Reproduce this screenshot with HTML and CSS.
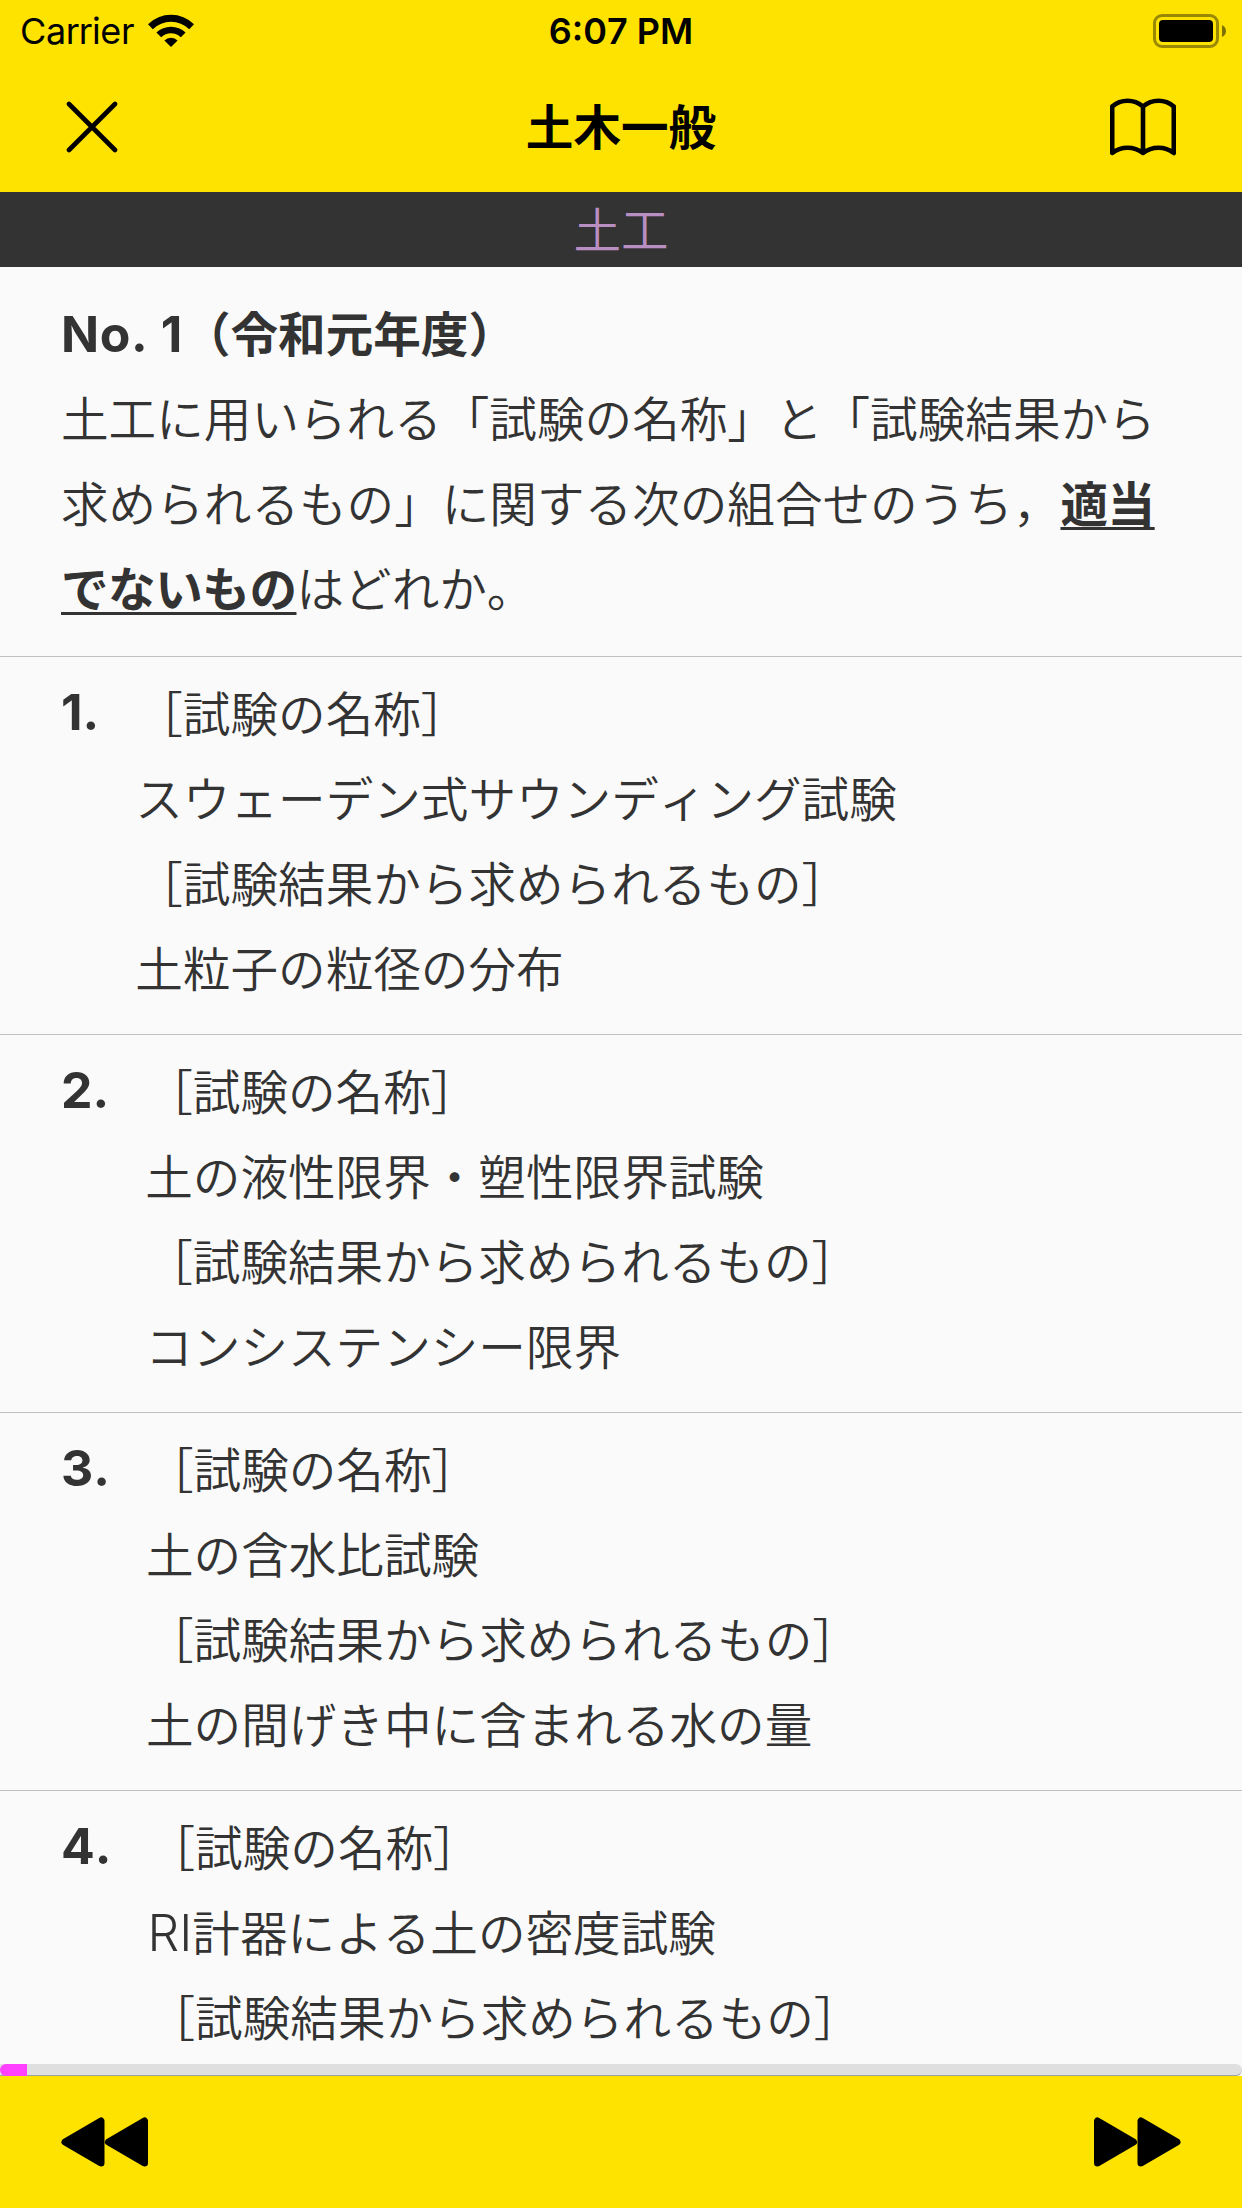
FILE: index.html
```html
<!DOCTYPE html>
<html lang="ja">
<head>
    <meta charset="UTF-8">
    <meta name="viewport" content="width=device-width, initial-scale=1.0">
    <title>土木一般</title>
    <link rel="stylesheet" href="styles.css">
</head>
<body>
    <div class="app">
        <header class="header">
            <div class="status-bar">
                <div class="carrier">
                    <span>Carrier</span>
                    <svg class="wifi" width="46" height="34" viewBox="0 0 46 34">
                        <path d="M0 10.2A33 33 0 0 1 46 10.2L41.2 15.2A26 26 0 0 0 4.8 15.2Z"/>
                        <path d="M8.4 18.6A21 21 0 0 1 37.6 18.6L32.8 23.2A14.2 14.2 0 0 0 13.2 23.2Z"/>
                        <path d="M16.4 26.4A9.6 9.6 0 0 1 29.6 26.4L23 33Z"/>
                    </svg>
                </div>
                <div class="clock">6:07 PM</div>
                <svg class="battery" width="74" height="34" viewBox="0 0 74 34">
                    <rect x="1.5" y="1.5" width="63" height="31" rx="7.5" fill="none" stroke="#000" stroke-opacity="0.4" stroke-width="3"/>
                    <rect x="6" y="6" width="54" height="22" rx="4"/>
                    <path d="M69 11Q73 13 73 17T69 23Z" fill-opacity="0.5"/>
                </svg>
            </div>
            <div class="nav-bar">
                <svg class="close" width="52" height="52" viewBox="0 0 52 52">
                    <path d="M3 3L49 49M49 3L3 49"/>
                </svg>
                <h1 class="title">土木一般</h1>
                <svg class="book" width="66" height="58" viewBox="0 0 66 58">
                    <path d="M33 8.5C24 .8 11 .8 2.2 8.5V55C11 48 24 48 33 55C42 48 55 48 63.8 55V8.5C55 .8 42 .8 33 8.5V55"/>
                </svg>
            </div>
        </header>

        <div class="category">土工</div>

        <main class="content">
            <section class="question">
                <h2 class="number"><span class="latin">No. 1</span>（令和元年度）</h2>
                <p>土工に用いられる「試験の名称」と「試験結果から<br>求められるもの」に関する次の組合せのうち，<strong>適当</strong><br><strong>でないもの</strong>はどれか。</p>
            </section>
            <section class="choice">
                <div class="label">1.</div>
                <p>［試験の名称］<br>スウェーデン式サウンディング試験<br>［試験結果から求められるもの］<br>土粒子の粒径の分布</p>
            </section>
            <section class="choice">
                <div class="label">2.</div>
                <p>［試験の名称］<br>土の液性限界・塑性限界試験<br>［試験結果から求められるもの］<br>コンシステンシー限界</p>
            </section>
            <section class="choice">
                <div class="label">3.</div>
                <p>［試験の名称］<br>土の含水比試験<br>［試験結果から求められるもの］<br>土の間げき中に含まれる水の量</p>
            </section>
            <section class="choice">
                <div class="label">4.</div>
                <p>［試験の名称］<br><span class="latin">RI</span>計器による土の密度試験<br>［試験結果から求められるもの］</p>
            </section>
        </main>

        <div class="progress"><div class="progress-value"></div></div>

        <footer class="toolbar">
            <svg width="88" height="52" viewBox="0 0 88 52">
                <path d="M5 26L41 5V47Z"/>
                <path d="M48.5 26L84.5 5V47Z"/>
            </svg>
            <svg width="88" height="52" viewBox="0 0 88 52">
                <path d="M39.5 26L3.5 5V47Z"/>
                <path d="M83 26L47 5V47Z"/>
            </svg>
        </footer>
    </div>
</body>
</html>
```

FILE: styles.css
```css
* {
    box-sizing: border-box;
}
body {
    margin: 0;
    font-family: "Noto Sans CJK JP", sans-serif;
    font-size: 47.6px;
    font-weight: 350;
    font-kerning: none;
    line-height: 85px;
    color: #333;
    background: #fafafa;
    text-spacing-trim: space-all;
}
h1, h2, p {
    margin: 0;
    font-size: inherit;
}
.app {
    display: flex;
    flex-direction: column;
    width: 1242px;
    height: 2208px;
    overflow: hidden;
}

/* header */
.header {
    flex: none;
    height: 192px;
    background: #ffe300;
    color: #000;
}
.status-bar {
    display: grid;
    grid-template-columns: 1fr auto 1fr;
    align-items: center;
    height: 60px;
    padding: 1px 15px 0 20px;
    font-family: Inter, sans-serif;
    font-size: 36px;
    font-weight: 400;
    line-height: 60px;
}
.carrier {
    display: flex;
    align-items: center;
    gap: 14px;
    letter-spacing: -0.4px;
}
.clock {
    padding-right: 5px;
    font-weight: 600;
}
.battery {
    justify-self: end;
}
.nav-bar {
    display: grid;
    grid-template-columns: 1fr auto 1fr;
    align-items: center;
    height: 132px;
    padding: 2px 66px 0 66px;
}
.title {
    padding-bottom: 6px;
    font-weight: 700;
}
.close, .book {
    fill: none;
    stroke: #000;
    stroke-width: 4.6;
    stroke-linecap: round;
    stroke-linejoin: round;
}
.book {
    justify-self: end;
}
.category {
    flex: none;
    height: 75px;
    line-height: 71px;
    text-align: center;
    color: #b98ec3;
    background: #333;
}

/* question and choices */
.content {
    flex: 1;
    min-height: 0;
    overflow: hidden;
    white-space: nowrap;
}
.question {
    height: 390px;
    padding: 22px 60px 0 61px;
    border-bottom: 1px solid #c0c0c0;
}
.number, strong {
    font-weight: 700;
}
strong {
    letter-spacing: -0.5px;
    text-decoration: underline;
    text-decoration-thickness: 3px;
    text-underline-offset: 5px;
}
.latin {
    font-family: Inter, sans-serif;
    font-size: 50px;
    line-height: 1;
}
.number .latin {
    letter-spacing: 0.6px;
}
.choice {
    display: flex;
    gap: 36px;
    height: 378px;
    padding: 12px 60px 0 61px;
    border-bottom: 1px solid #c0c0c0;
}
.label {
    padding-top: 1px;
    font-family: Inter, sans-serif;
    font-size: 50px;
    font-weight: 700;
}

/* bottom */
.progress {
    flex: none;
    height: 12px;
    background: #dfdfdf;
    border-bottom: 1px solid #a0a0a0;
    border-radius: 0 6px 6px 0;
}
.progress-value {
    width: 27px;
    height: 12px;
    background: #ff40ff;
    border-radius: 6px 0 0 6px;
}
.toolbar {
    display: flex;
    flex: none;
    justify-content: space-between;
    align-items: center;
    height: 132px;
    padding: 0 60px;
    background: #ffe300;
}
.toolbar svg {
    stroke: #000;
    stroke-width: 7;
    stroke-linejoin: round;
}
```
